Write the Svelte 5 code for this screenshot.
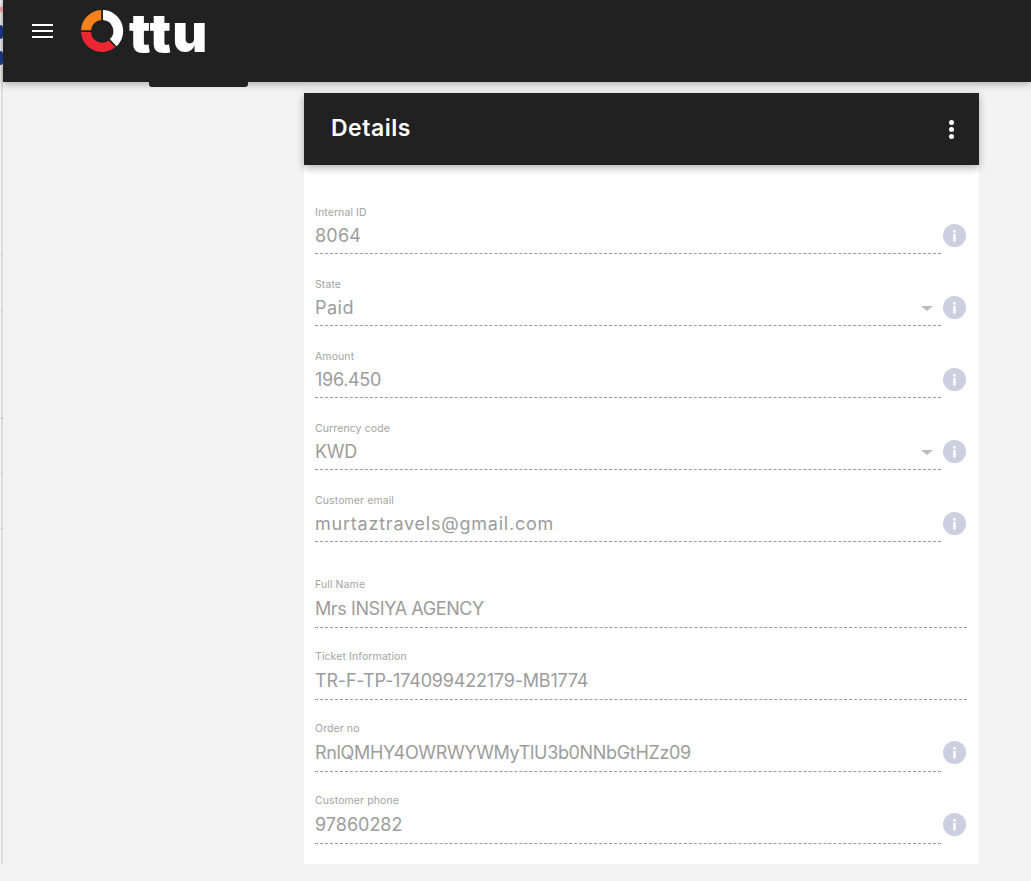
<script lang="ts">
  interface Field {
    label: string;
    value: string;
    select?: boolean;
    info?: boolean;
    gap?: boolean;
    tight?: boolean;
    tracking?: number;
  }

  const fields: Field[] = [
    { label: 'Internal ID', value: '8064', info: true, tracking: 0.2 },
    { label: 'State', value: 'Paid', select: true, info: true, tracking: 0.5 },
    { label: 'Amount', value: '196.450', info: true, tracking: -0.3 },
    { label: 'Currency code', value: 'KWD', select: true, info: true, tracking: -0.3 },
    { label: 'Customer email', value: 'murtaztravels@gmail.com', info: true, tracking: 0.78 },
    { label: 'Full Name', value: 'Mrs INSIYA AGENCY', gap: true, tight: true, tracking: -0.4 },
    { label: 'Ticket Information', value: 'TR-F-TP-174099422179-MB1774', tight: true, tracking: -0.19 },
    { label: 'Order no', value: 'RnlQMHY4OWRWYWMyTlU3b0NNbGtHZz09', info: true, tight: true, tracking: -0.34 },
    { label: 'Customer phone', value: '97860282', info: true, tight: true },
  ];
</script>

<div class="page">
  <div class="edge">
    <span class="edge-pink"></span>
    <span class="edge-blue"></span>
    <span class="edge-blue"></span>
  </div>

  <div class="shell">
    <header class="topbar">
      <button class="menu" aria-label="Menu">
        <span></span><span></span><span></span>
      </button>
      <div class="logo">
        <svg width="44" height="44" viewBox="0 0 44 44" aria-hidden="true">
          <path d="M1 21.2A21 21 0 0 1 21.2 1V11A11 11 0 0 0 11 21.2Z" fill="#f7821b"></path>
          <path d="M23 1A21 21 0 0 1 36.6 37.2L29.8 30A11 11 0 0 0 23 11Z" fill="#ffffff"></path>
          <path d="M1 23A21 21 0 0 0 35.4 38.2L28.6 31.4A11 11 0 0 1 11 23Z" fill="#ee2631"></path>
        </svg>
        <span class="logo-text">ttu</span>
      </div>
      <span class="tab-peek"></span>
    </header>

    <main class="content">
      <section class="card">
        <div class="card-head">
          <h2>Details</h2>
          <button class="kebab" aria-label="More">
            <span></span><span></span><span></span>
          </button>
        </div>

        <div class="card-body">
          {#each fields as field}
            <div class="row" class:row--gap={field.gap} class:row--tight={field.tight}>
              <div class="field">
                <span class="label">{field.label}</span>
                <span class="value" style:letter-spacing={field.tracking ? `${field.tracking}px` : null}>{field.value}</span>
                {#if field.select}
                  <span class="caret"></span>
                {/if}
              </div>
              {#if field.info}
                <span class="info" aria-hidden="true">
                  <svg width="23" height="23" viewBox="0 0 23 23">
                    <circle cx="11.5" cy="11.5" r="11.5" fill="#cbcfdf"></circle>
                    <rect x="10.2" y="10" width="2.6" height="7.5" fill="#fff"></rect>
                    <rect x="10.2" y="6" width="2.6" height="2.6" fill="#fff"></rect>
                  </svg>
                </span>
              {/if}
            </div>
          {/each}
        </div>
      </section>
    </main>
  </div>
</div>

<style>
  :global(body) {
    background: #f3f3f3;
    font-family: Inter, "Open Sans", sans-serif;
  }

  .page {
    display: flex;
    height: 864px;
    overflow: hidden;
  }

  .edge {
    position: relative;
    flex: 0 0 3px;
    width: 3px;
    box-sizing: border-box;
    border-left: 1px solid #f3f3f3;
    background:
      linear-gradient(#c4c4c4, #c4c4c4) 0 254px / 100% 1px no-repeat,
      linear-gradient(#c4c4c4, #c4c4c4) 0 310px / 100% 1px no-repeat,
      linear-gradient(#a8a8a8, #a8a8a8) 0 418px / 100% 1px no-repeat,
      linear-gradient(#c4c4c4, #c4c4c4) 0 473px / 100% 1px no-repeat,
      linear-gradient(#c4c4c4, #c4c4c4) 0 528px / 100% 1px no-repeat,
      #dedede;
  }

  .edge-pink {
    position: absolute;
    left: -1px;
    top: 7px;
    width: 3px;
    height: 5px;
    background: #f2a7a7;
  }

  .edge-blue {
    position: absolute;
    left: -1px;
    top: 25px;
    width: 3px;
    height: 14px;
    border-radius: 0 3px 3px 0;
    background: #1d3a8a;
  }

  .edge-blue + .edge-blue {
    top: 51px;
  }

  .shell {
    flex: 1;
    min-width: 0;
  }

  .topbar {
    position: relative;
    z-index: 2;
    display: flex;
    align-items: flex-start;
    height: 82px;
    padding-left: 29px;
    background: #212121;
    box-shadow: 0 2px 8px rgba(0, 0, 0, 0.3);
  }

  .menu {
    display: flex;
    flex-direction: column;
    gap: 3.4px;
    width: 21px;
    margin-top: 24px;
    padding: 0;
    border: none;
    background: transparent;
  }

  .menu span {
    display: block;
    height: 2.4px;
    background: #fff;
  }

  .logo {
    display: flex;
    align-items: flex-start;
    margin-left: 27px;
    margin-top: 9px;
  }

  .logo-text {
    margin-left: 5px;
    margin-top: -9px;
    color: #fff;
    font-family: Inter, sans-serif;
    font-size: 54px;
    font-weight: 900;
    line-height: 66px;
    letter-spacing: 1.2px;
  }

  .tab-peek {
    position: absolute;
    left: 146px;
    top: 82px;
    width: 99px;
    height: 5px;
    border-radius: 0 0 3px 3px;
    background: #212121;
  }

  .content {
    padding: 11px 52px 0 301px;
  }

  .card {
    background: #fff;
    height: 771px;
  }

  .card-head {
    display: flex;
    align-items: center;
    justify-content: space-between;
    height: 72px;
    padding: 0 25px 0 27px;
    background: #212121;
    box-shadow: 0 3px 8px rgba(0, 0, 0, 0.3);
  }

  h2 {
    margin: 0 0 3px;
    color: #fff;
    font-size: 23px;
    font-weight: 600;
    letter-spacing: 0.5px;
  }

  .kebab {
    display: flex;
    flex-direction: column;
    gap: 2px;
    padding: 0;
    border: none;
    background: transparent;
  }

  .kebab span {
    width: 5px;
    height: 5px;
    border-radius: 50%;
    background: #fff;
  }

  .card-body {
    padding: 17px 12px 0 11px;
  }

  .row {
    display: flex;
    align-items: flex-start;
    height: 72px;
  }

  .row--gap {
    margin-top: 14px;
  }

  .field {
    position: relative;
    flex: 1;
    height: 72px;
    box-sizing: border-box;
    padding-top: 24px;
    border-bottom: 1px dashed #9a9a9a;
  }

  .row--tight .field {
    padding-top: 22px;
  }

  .label {
    display: block;
    height: 14px;
    color: #a3a3a3;
    font-size: 10.5px;
    line-height: 14px;
    letter-spacing: 0.1px;
  }

  .value {
    display: block;
    margin-top: 3px;
    color: #9c9c9c;
    font-size: 18px;
    line-height: 26px;
  }

  .row--tight .value {
    margin-top: 4px;
  }

  .caret {
    position: absolute;
    right: 8px;
    top: 52px;
    border-left: 6px solid transparent;
    border-right: 6px solid transparent;
    border-top: 5.5px solid #bdbdbd;
  }

  .info {
    display: block;
    width: 23px;
    height: 23px;
    margin: 42px 1px 0 2px;
  }

  .row--tight .info {
    margin-top: 41px;
  }

  .info svg {
    display: block;
  }
</style>
